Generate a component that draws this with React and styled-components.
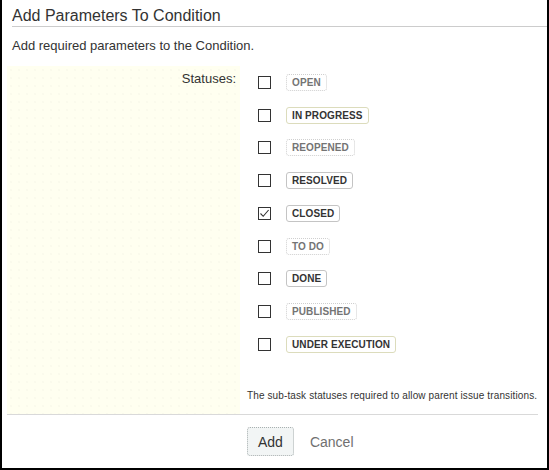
import React, { useState } from 'react';
import styled, { createGlobalStyle } from 'styled-components';

const GlobalStyle = createGlobalStyle`
    body {
        margin: 0;
        background: #ffffff;
        font-family: "Liberation Sans", Arial, sans-serif;
        color: #333333;
    }
`;

const Dialog = styled.div`
    width: 549px;
    height: 470px;
    box-sizing: border-box;
    border-left: 2px solid #000000;
    border-right: 2px solid #000000;
    border-bottom: 2px solid #000000;
    background: #ffffff;
    display: flex;
    flex-direction: column;
`;

const Title = styled.h2`
    margin: 0 0 0 10px;
    padding: 6px 0 1px;
    font-size: 16px;
    line-height: 19px;
    font-weight: normal;
    color: #333333;
    border-bottom: 1px solid #cccccc;
`;

const Description = styled.p`
    margin: 11px 0 0 10px;
    font-size: 13px;
    line-height: 15px;
    color: #333333;
`;

const FormArea = styled.div`
    display: flex;
    margin: 13px 9px 0 5px;
    height: 349px;
    box-sizing: border-box;
    border-bottom: 1px solid #d9d9d9;
`;

const LabelColumn = styled.div`
    width: 233px;
    flex-shrink: 0;
    background-color: #fffff0;
    background-image: radial-gradient(#f4f4e6 0.6px, transparent 0.8px);
    background-size: 8px 8px;
    text-align: right;
`;

const FieldLabel = styled.div`
    padding: 5px 4px 0 0;
    font-size: 13px;
    line-height: 15px;
    color: #333333;
`;

const FieldColumn = styled.div`
    flex: 1;
    min-width: 0;
    display: flex;
    flex-direction: column;
`;

const StatusList = styled.div`
    display: flex;
    flex-direction: column;
`;

const StatusRow = styled.label`
    display: flex;
    align-items: center;
    height: 32.75px;
    padding-left: 18px;
    cursor: pointer;
`;

const Box = styled.span`
    width: 13px;
    height: 13px;
    box-sizing: border-box;
    border: 1px solid #333333;
    background: #ffffff;
    display: flex;
    align-items: center;
    justify-content: center;
    margin-right: 15px;
    flex-shrink: 0;
`;

const Lozenge = styled.span`
    display: inline-block;
    height: 17px;
    box-sizing: border-box;
    padding: 0 5px;
    border-radius: 3px;
    font-size: 10px;
    line-height: 15px;
    font-weight: bold;
    letter-spacing: 0.1px;
    text-transform: uppercase;
    color: ${(p) => (p.$faded ? '#747474' : '#333333')};
    border: 1px ${(p) => (p.$faded ? 'dotted #cfcfcf' : `solid ${p.$tint || '#c4c4c4'}`)};
    background: #ffffff;
`;

const HelpText = styled.div`
    margin-top: 29px;
    padding-left: 7px;
    font-size: 10px;
    line-height: 12px;
    letter-spacing: 0.12px;
    white-space: nowrap;
    color: #333333;
`;

const Footer = styled.div`
    display: flex;
    align-items: center;
    gap: 16px;
    padding: 12px 0 0 245px;
`;

const AddButton = styled.button`
    height: 29px;
    padding: 0 10px;
    font-family: "Liberation Sans", Arial, sans-serif;
    font-size: 14px;
    color: #333333;
    background: #f2f5f5;
    border: 1px dotted #a8b0b0;
    border-radius: 3px;
    cursor: pointer;
`;

const CancelLink = styled.a`
    font-size: 14px;
    color: #707070;
    text-decoration: none;
    cursor: pointer;
`;

const statuses = [
    { name: 'Open', faded: true },
    { name: 'In Progress', tint: '#dcdcbc' },
    { name: 'Reopened', faded: true },
    { name: 'Resolved' },
    { name: 'Closed' },
    { name: 'To Do', faded: true },
    { name: 'Done' },
    { name: 'Published', faded: true },
    { name: 'Under Execution', tint: '#dcdcbc' },
];

const Check = () => (
    <svg width="11" height="11" viewBox="0 0 11 11">
        <path d="M1.5 5.5 L4.2 8.3 L9.6 2" fill="none" stroke="#333" strokeWidth="1.1" />
    </svg>
);

export default function App() {
    const [checked, setChecked] = useState({ Closed: true });

    const toggle = (name) => setChecked((c) => ({ ...c, [name]: !c[name] }));

    return (
        <>
            <GlobalStyle />
            <Dialog>
                <Title>Add Parameters To Condition</Title>
                <Description>Add required parameters to the Condition.</Description>
                <FormArea>
                    <LabelColumn>
                        <FieldLabel>Statuses:</FieldLabel>
                    </LabelColumn>
                    <FieldColumn>
                        <StatusList>
                            {statuses.map((s) => (
                                <StatusRow key={s.name} onClick={() => toggle(s.name)}>
                                    <Box>{checked[s.name] && <Check />}</Box>
                                    <Lozenge $faded={s.faded} $tint={s.tint}>{s.name}</Lozenge>
                                </StatusRow>
                            ))}
                        </StatusList>
                        <HelpText>The sub-task statuses required to allow parent issue transitions.</HelpText>
                    </FieldColumn>
                </FormArea>
                <Footer>
                    <AddButton type="button">Add</AddButton>
                    <CancelLink>Cancel</CancelLink>
                </Footer>
            </Dialog>
        </>
    );
}
